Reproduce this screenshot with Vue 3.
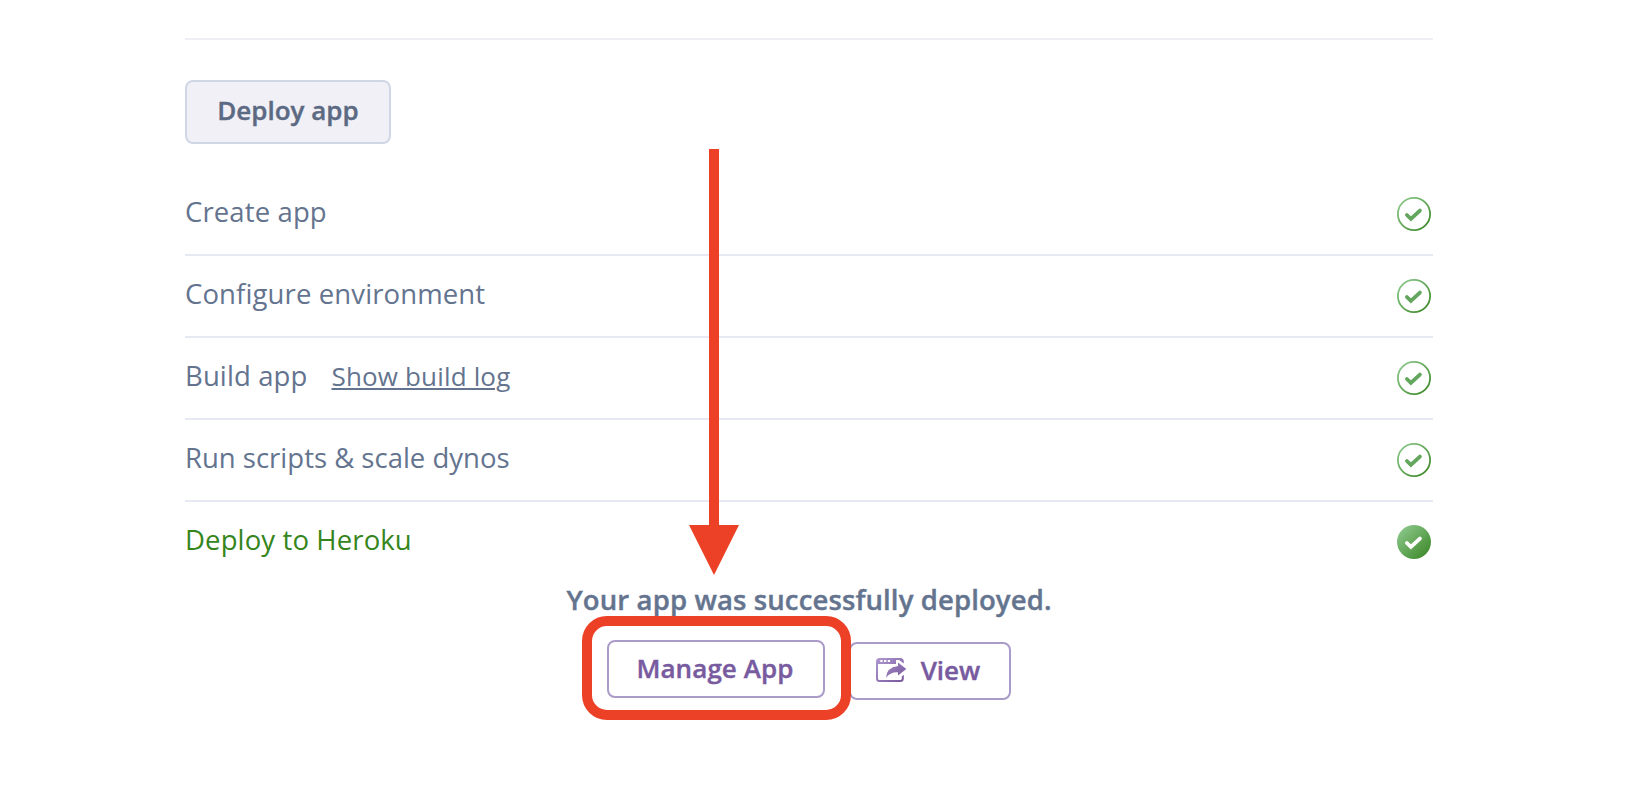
<script setup>
const steps = [
  { id: 'create', label: 'Create app' },
  { id: 'configure', label: 'Configure environment' },
  { id: 'build', label: 'Build app', link: 'Show build log' },
  { id: 'run', label: 'Run scripts & scale dynos' },
  { id: 'release', label: 'Deploy to Heroku', active: true },
]
</script>

<template>
  <main class="page">
    <section class="panel">
      <button class="btn deploy" type="button"><span>Deploy app</span></button>
      <ul class="steps">
        <li v-for="s in steps" :key="s.id" class="step" :class="['step-' + s.id, { active: s.active }]">
          <span class="label">{{ s.label }}</span>
          <a v-if="s.link" class="log">{{ s.link }}</a>
          <svg class="check" width="34" height="34" viewBox="0 0 34 34" fill="none">
            <defs>
              <linearGradient :id="'g-' + s.id" x1="3" y1="3" x2="31" y2="31" gradientUnits="userSpaceOnUse">
                <stop offset="0" stop-color="#8cc88b" />
                <stop offset="1" stop-color="#3f8a2b" />
              </linearGradient>
            </defs>
            <circle v-if="s.active" cx="17" cy="17" r="17" :fill="`url(#g-${s.id})`" />
            <circle v-else cx="17" cy="17" r="16.1" :stroke="`url(#g-${s.id})`" stroke-width="1.8" />
            <path
              d="M9.9 18 13.9 21.9 22.9 13.6"
              :stroke="s.active ? '#fff' : '#63a65d'"
              stroke-width="3.8"
              stroke-linecap="round"
            />
          </svg>
        </li>
      </ul>
      <p class="message"><span>Your app was successfully deployed.</span></p>
      <div class="actions">
        <button class="btn outline manage" type="button"><span>Manage App</span></button>
        <button class="btn outline view" type="button">
          <svg class="window" width="31" height="24" viewBox="0 0 31 24">
            <defs>
              <linearGradient id="g-view" x1="4" y1="0" x2="26" y2="24" gradientUnits="userSpaceOnUse">
                <stop offset="0" stop-color="#ab95cc" />
                <stop offset="1" stop-color="#79589f" />
              </linearGradient>
            </defs>
            <path
              fill="url(#g-view)"
              fill-rule="evenodd"
              d="M3.5 0H24.2Q27.8 0 27.8 3.6V5.5L23.2 2H20V6H2V20.5Q2 22 3.5 22H24.2Q25.8 22 25.8 20.5V18.5L27.8 16.8V20.5Q27.8 24 24.2 24H3.5Q0 24 0 20.5V3.5Q0 0 3.5 0ZM4.3 2V4H6.6V2ZM8 2V4H10.3V2ZM11.8 2V4H14.1V2Z"
            />
            <path fill="url(#g-view)" d="M22 4.6 30.3 11 22 17.4V14.3Q14.5 13.7 10 19.8Q10.6 9.3 22 8Z" />
          </svg>
          <span>View</span>
        </button>
      </div>
    </section>

    <svg class="arrow" width="50" height="426" viewBox="0 0 50 426">
      <path d="M20 0H30V376H50L25 426 0 376H20Z" fill="#ec4126" />
    </svg>
    <div class="highlight"></div>
  </main>
</template>

<style>
body {
  background: #fff;
}
</style>

<style scoped>
.page {
  position: relative;
  box-sizing: border-box;
  height: 810px;
  padding: 38px 205px 0 185px;
  overflow: hidden;
  font-family: 'Open Sans', 'Noto Sans', sans-serif;
  color: #64748f;
}
.panel {
  border-top: 2px solid #eeeff6;
  padding-top: 40px;
}
.btn {
  display: flex;
  align-items: center;
  justify-content: center;
  box-sizing: border-box;
  margin: 0;
  padding: 0 0 2px;
  border-radius: 8px;
  font: 600 26px/36px 'Open Sans', 'Noto Sans', sans-serif;
  white-space: nowrap;
  -webkit-text-stroke: 0.4px currentColor;
}
.deploy {
  width: 206px;
  height: 64px;
  padding-bottom: 4px;
  border: 2px solid #cfd7e6;
  background: #f0f0f6;
  color: #5c6982;
}
.steps {
  list-style: none;
  margin: 30px 0 0;
  padding: 0;
}
.step {
  display: flex;
  align-items: flex-start;
  box-sizing: border-box;
  height: 82px;
  padding-right: 2px;
  border-bottom: 2px solid #e6e9f1;
  font-size: 27.5px;
  line-height: 38px;
  letter-spacing: 0.12px;
  white-space: nowrap;
}
.step-run {
  letter-spacing: 0;
}
.step.active {
  height: 80px;
  border-bottom: 0;
  color: #35851c;
}
.label {
  margin-top: 19px;
}
.log {
  margin: 19px 0 0 24px;
  font-size: 26px;
  letter-spacing: 0.16px;
  text-decoration: underline;
  text-decoration-thickness: 2px;
  text-underline-offset: 2px;
}
.check {
  margin: 23px 0 0 auto;
}
.message {
  margin: -1px 0 0;
  text-align: center;
  font-size: 27.5px;
  font-weight: 600;
  line-height: 38px;
  letter-spacing: 0.12px;
  -webkit-text-stroke: 0.4px currentColor;
}
.actions {
  display: flex;
  align-items: flex-start;
  gap: 24px;
  margin: 21px 0 0 422px;
}
.outline {
  height: 58px;
  border: 2px solid #aa9bc8;
  background: #fff;
  color: #785a9f;
}
.manage {
  width: 218px;
  padding-right: 2px;
  letter-spacing: 0.08px;
}
.view {
  width: 162px;
  margin-top: 2px;
  padding-right: 4px;
  gap: 14px;
}
.arrow {
  position: absolute;
  left: 689px;
  top: 149px;
}
.highlight {
  position: absolute;
  left: 582px;
  top: 616px;
  box-sizing: border-box;
  width: 269px;
  height: 104px;
  border: 10px solid #ec4126;
  border-radius: 25px;
}
</style>
